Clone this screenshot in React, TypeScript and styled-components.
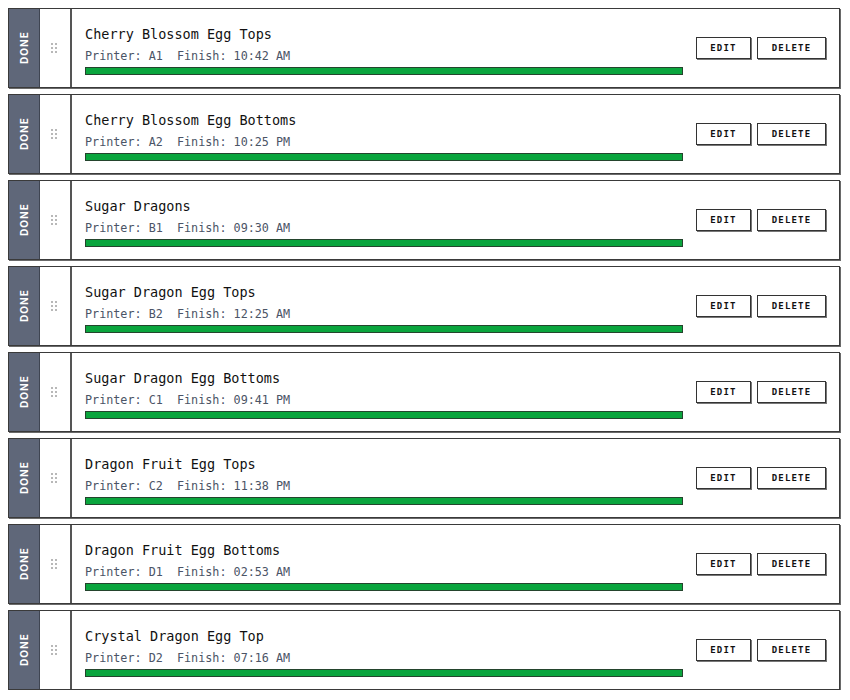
import React from "react";
import styled, { createGlobalStyle } from "styled-components";

const Global = createGlobalStyle`
  html, body { margin: 0; padding: 0; background: #ffffff; }
  body { padding: 8px 10px 0 8px; font-family: "DejaVu Sans Mono", monospace; }
`;

const List = styled.div`
  display: flex;
  flex-direction: column;
  gap: 6px;
  width: 832px;
`;

const Row = styled.div`
  display: flex;
  height: 80px;
  box-sizing: border-box;
  border: 1px solid #3a3a3a;
  box-shadow: 1px 1px 0 #6a6a6a;
  background: #fff;
`;

const Status = styled.div`
  width: 31px;
  box-sizing: border-box;
  flex: none;
  background: #5f6779;
  border-right: 1px solid #3f4552;
  display: flex;
  align-items: center;
  justify-content: center;
`;

const StatusText = styled.span`
  writing-mode: vertical-rl;
  transform: rotate(180deg);
  color: #ffffff;
  font-family: "Inter", "Liberation Sans", sans-serif;
  font-weight: 700;
  font-size: 10px;
  letter-spacing: 1.1px;
`;

const Handle = styled.div`
  width: 32px;
  box-sizing: border-box;
  flex: none;
  border-right: 2px solid #555;
  display: flex;
  align-items: center;
  justify-content: center;
`;

const Dots = styled.div`
  display: grid;
  grid-template-columns: 2px 2px;
  grid-auto-rows: 2px;
  gap: 2px 2px;
  margin-right: 2px;
  span {
    background: #a0a0a0;
    border-radius: 1px;
  }
`;

const Content = styled.div`
  flex: 1;
  min-width: 0;
  padding: 16px 0 0 13px;
  display: flex;
  flex-direction: column;
`;

const Title = styled.div`
  font-size: 13.5px;
  line-height: 18px;
  color: #111;
`;

const Meta = styled.div`
  font-size: 11.75px;
  line-height: 18px;
  margin-top: 4px;
  color: #4b5466;
  white-space: pre;
`;

const Bar = styled.div`
  margin-top: 2px;
  height: 8px;
  box-sizing: border-box;
  border: 1px solid #24442d;
  background: #0aa53d;
`;

const Actions = styled.div`
  flex: none;
  display: flex;
  align-items: center;
  gap: 6px;
  padding: 0 13px 0 13px;
`;

const Button = styled.button<{ $w: number }>`
  width: ${(p) => p.$w}px;
  height: 22px;
  box-sizing: border-box;
  border: 1px solid #333;
  box-shadow: 1px 1px 0 #777;
  background: #fff;
  color: #111;
  font-family: "DejaVu Sans Mono", monospace;
  font-weight: 700;
  font-size: 9px;
  letter-spacing: 1.2px;
  padding: 0;
  cursor: pointer;
`;

const items = [
  ["Cherry Blossom Egg Tops", "A1", "10:42 AM"],
  ["Cherry Blossom Egg Bottoms", "A2", "10:25 PM"],
  ["Sugar Dragons", "B1", "09:30 AM"],
  ["Sugar Dragon Egg Tops", "B2", "12:25 AM"],
  ["Sugar Dragon Egg Bottoms", "C1", "09:41 PM"],
  ["Dragon Fruit Egg Tops", "C2", "11:38 PM"],
  ["Dragon Fruit Egg Bottoms", "D1", "02:53 AM"],
  ["Crystal Dragon Egg Top", "D2", "07:16 AM"],
];

export default function App() {
  return (
    <>
      <Global />
      <List>
        {items.map(([name, printer, time]) => (
          <Row key={name}>
            <Status>
              <StatusText>DONE</StatusText>
            </Status>
            <Handle>
              <Dots>
                {Array.from({ length: 6 }).map((_, i) => (
                  <span key={i} />
                ))}
              </Dots>
            </Handle>
            <Content>
              <Title>{name}</Title>
              <Meta>{`Printer: ${printer}  Finish: ${time}`}</Meta>
              <Bar />
            </Content>
            <Actions>
              <Button $w={55}>EDIT</Button>
              <Button $w={69}>DELETE</Button>
            </Actions>
          </Row>
        ))}
      </List>
    </>
  );
}
